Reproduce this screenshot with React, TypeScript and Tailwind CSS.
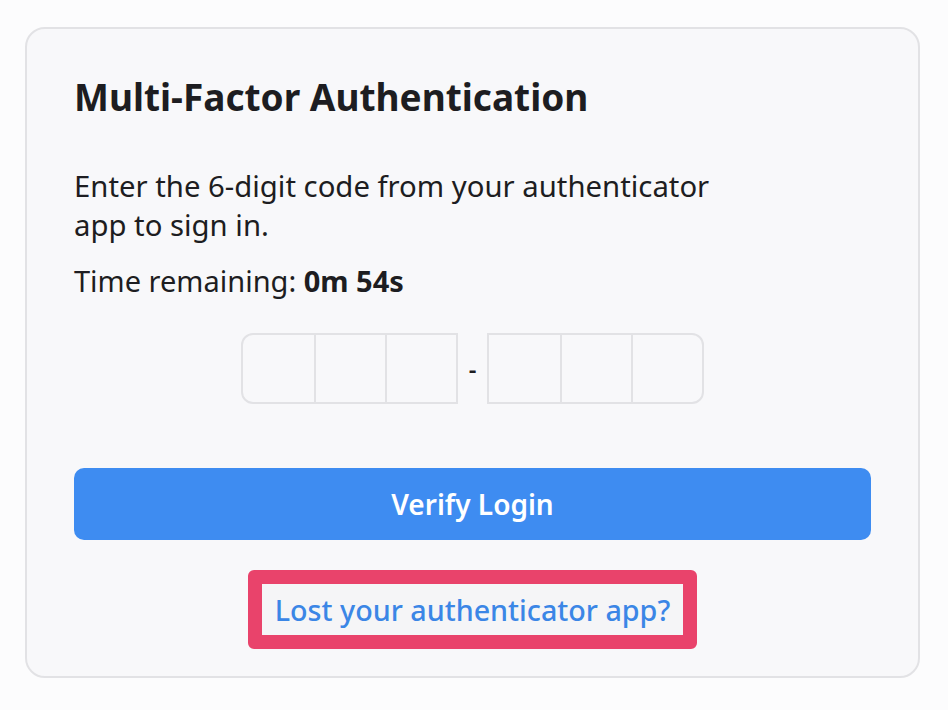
export default function App() {
  const cells = [0, 1, 2];

  return (
    <div
      className="min-h-[710px] w-full bg-[#fcfcfd] pt-[27px] pl-[25px] pr-[28px]"
      style={{ fontFamily: '"Noto Sans", "Open Sans", sans-serif' }}
    >
      <div className="w-[895px] h-[651px] rounded-[20px] border-2 border-[#e2e2e5] bg-[#f8f8fa] px-[47px] pt-[42px]">
        <h1 className="text-[37px] leading-[52px] font-bold text-[#1d1d21]">
          Multi-Factor Authentication
        </h1>

        <p className="mt-[44px] w-[680px] text-[29.3px] leading-[39px] text-[#1d1d21]">
          Enter the 6-digit code from your authenticator app to sign in.
        </p>
        <p className="mt-[16px] text-[29px] leading-[39px] text-[#1d1d21]">
          Time remaining: <span className="font-bold">0m 54s</span>
        </p>

        {/* code inputs */}
        <div className="mt-[33px] flex items-center justify-center gap-[7px]">
          <div className="flex h-[71px] rounded-l-[12px] border-2 border-[#e2e2e5] overflow-hidden">
            {cells.map((i) => (
              <div
                key={i}
                className={`w-[71px] h-full ${i > 0 ? "border-l-2 border-[#e2e2e5]" : ""}`}
              />
            ))}
          </div>
          <span className="w-[15px] text-center text-[24px] font-semibold leading-none text-[#1d1d21]">-</span>
          <div className="flex h-[71px] rounded-r-[12px] border-2 border-[#e2e2e5] overflow-hidden">
            {cells.map((i) => (
              <div
                key={i}
                className={`w-[71px] h-full ${i > 0 ? "border-l-2 border-[#e2e2e5]" : ""}`}
              />
            ))}
          </div>
        </div>

        <button className="mt-[64px] w-full h-[72px] rounded-[10px] bg-[#3e8cf1] text-white text-[28px] font-semibold">
          Verify Login
        </button>

        <div className="mt-[30px] flex justify-center">
          <div className="rounded-[6px] border-[14px] border-[#e9436b] bg-[#f5f5f7] px-[13px] h-[79px] flex items-center">
            <a className="text-[28.7px] font-medium text-[#3b86e6]">
              Lost your authenticator app?
            </a>
          </div>
        </div>
      </div>
    </div>
  );
}
